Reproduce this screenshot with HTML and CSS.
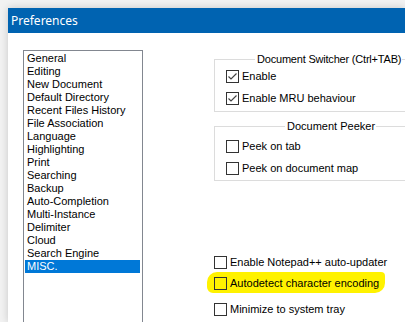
FILE: index.html
```html
<!DOCTYPE html>
<html lang="en">
<head>
  <meta charset="UTF-8">
  <meta name="viewport" content="width=device-width, initial-scale=1">
  <title>Preferences</title>
  <link rel="stylesheet" href="styles.css">
</head>
<body>
<div class="window">
  <div class="titlebar">Preferences</div>
  <div class="content">
    <ul class="list">
      <li>General</li>
      <li>Editing</li>
      <li>New Document</li>
      <li>Default Directory</li>
      <li>Recent Files History</li>
      <li>File Association</li>
      <li>Language</li>
      <li>Highlighting</li>
      <li>Print</li>
      <li>Searching</li>
      <li>Backup</li>
      <li>Auto-Completion</li>
      <li>Multi-Instance</li>
      <li>Delimiter</li>
      <li>Cloud</li>
      <li>Search Engine</li>
      <li class="selected">MISC.</li>
    </ul>
    <div class="panel">
      <fieldset class="group group-switcher">
        <legend>Document Switcher (Ctrl+TAB)</legend>
        <div class="check"><span class="box"><svg viewBox="0 0 11 11"><polyline points="1.5,5.5 4,8 9.5,2.5"/></svg></span>Enable</div>
        <div class="check"><span class="box"><svg viewBox="0 0 11 11"><polyline points="1.5,5.5 4,8 9.5,2.5"/></svg></span>Enable MRU behaviour</div>
      </fieldset>
      <fieldset class="group group-peeker">
        <legend>Document Peeker</legend>
        <div class="check"><span class="box"></span>Peek on tab</div>
        <div class="check"><span class="box"></span>Peek on document map</div>
      </fieldset>
      <div class="options">
        <div class="check"><span class="box"></span>Enable Notepad++ auto-updater</div>
        <div class="check autodetect"><span class="marker"></span><span class="box"></span>Autodetect character encoding</div>
        <div class="check tray"><span class="box"></span>Minimize to system tray</div>
      </div>
    </div>
  </div>
</div>
</body>
</html>
```

FILE: styles.css
```css
html, body { overflow: hidden; }
body { margin: 0; padding: 8px 0 0 8px; background: #f2f2f2; height: 322px; box-sizing: border-box; font-family: "Liberation Sans", Arial, sans-serif; }
.window { background: #fff; width: 397px; height: 314px; overflow: hidden; box-shadow: 0 0 8px rgba(0,0,0,0.18); }
.titlebar { height: 25px; line-height: 25px; background: #0063b1; color: #fff; font-family: "Noto Sans", sans-serif; font-size: 12px; padding-left: 3px; }
.content { display: flex; padding: 17px 0 0 15px; }

.list { list-style: none; margin: 0; padding: 1px; width: 120px; height: 300px; border: 1px solid #828790; box-sizing: border-box; font-size: 11px; flex: none; }
.list li { height: 13px; line-height: 13px; padding-left: 2px; color: #000; white-space: nowrap; }
.list li.selected { background: #0078d7; color: #fff; margin-right: 1px; }

.panel { margin-left: 71px; width: 240px; flex: none; font-size: 11px; }
.group { margin: 0; border: 1px solid #dcdcdc; padding: 0 0 0 11px; min-width: 0; }
.group legend { padding: 0 1px 0 2px; font-size: 11px; line-height: 12px; white-space: nowrap; }
.group-switcher { margin-top: 3px; padding-bottom: 2px; }
.group-switcher legend { margin-left: 29px; letter-spacing: -0.2px; }
.group-peeker { margin-top: 8px; padding-top: 3px; padding-bottom: 1px; }
.group-peeker legend { margin-left: 59px; }

.check { position: relative; display: flex; align-items: center; height: 22px; white-space: nowrap; color: #000; }
.box { width: 13px; height: 13px; border: 1px solid #333; box-sizing: border-box; margin-right: 3px; background: #fff; flex: none; }
.box svg { display: block; width: 11px; height: 11px; fill: none; stroke: #444; stroke-width: 1.2; }

.options { margin-top: 70px; }
.autodetect { margin-top: -1px; isolation: isolate; }
.autodetect .box { background: transparent; }
.tray { margin-top: 4px; }
.marker { position: absolute; left: -7px; top: 0; width: 178px; height: 21px; z-index: -1; background: #fff200; border-radius: 10px 4px 10px 6px; }
```
